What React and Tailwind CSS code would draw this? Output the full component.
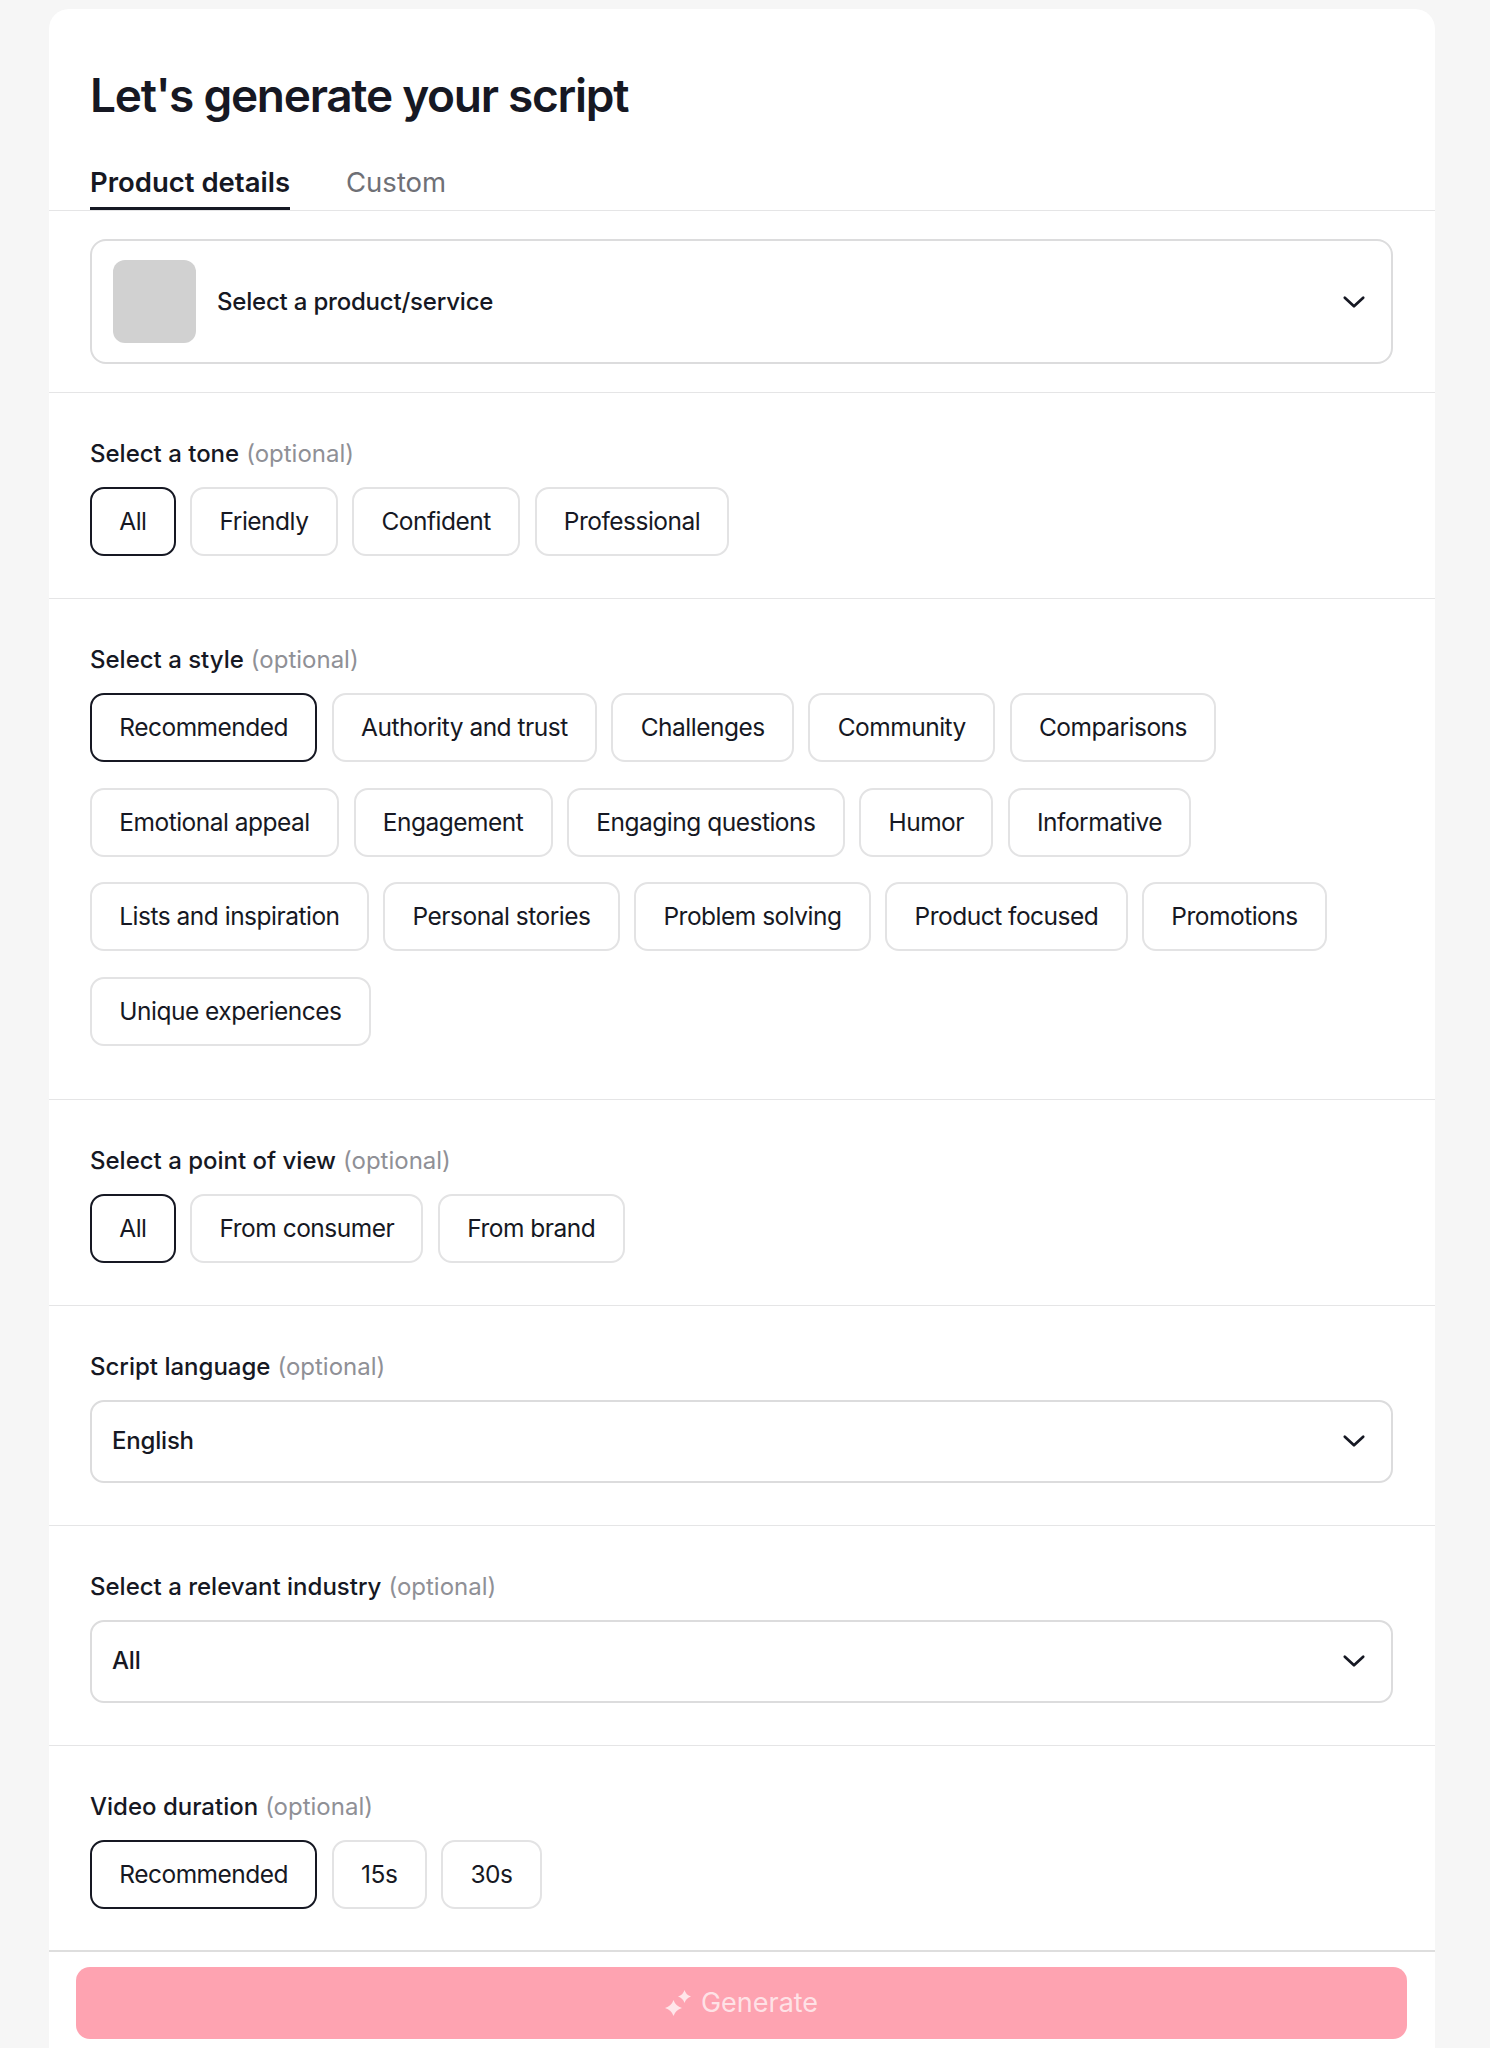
const FONT = "font-['Inter','Noto_Sans',sans-serif]";

function Chevron() {
  return (
    <svg viewBox="0 0 24 24" className="h-[26px] w-[26px] shrink-0" fill="none" stroke="#161823" strokeWidth="2.5" strokeLinecap="round" strokeLinejoin="round">
      <path d="M3.5 8 12 16 20.5 8" />
    </svg>
  );
}

function Sparkle() {
  return (
    <svg viewBox="0 0 26 26" className="h-[26px] w-[26px] shrink-0" fill="currentColor">
      <path d="M8.5 10Q10.500 16 17 18 10.500 20 8.500 26 6.500 20 0 18 6.500 16 8.500 10Z" />
      <path d="M19.500 0Q21 5 26 6.500 21 8 19.500 13 18 8 13 6.500 18 5 19.500 0Z" />
    </svg>
  );
}

function Label({ title }) {
  return (
    <div className="mb-[16px] flex h-[34px] items-center gap-[7px] text-[24px] leading-[34px]">
      <span className="font-medium text-[#161823]">{title}</span>
      <span className="text-[#8f9096]">(optional)</span>
    </div>
  );
}

function Chips({ items, selected }) {
  return (
    <div className="flex flex-wrap gap-x-[14.5px] gap-y-[25.5px]">
      {items.map((item) => (
        <div
          key={item}
          className={`flex h-[69px] items-center rounded-[14px] border-2 px-[27.25px] text-[24.5px] tracking-[-0.5px] text-[#161823] ${item === selected ? "border-[#161823]" : "border-[#e3e3e4]"}`}
        >
          {item}
        </div>
      ))}
    </div>
  );
}

function SelectBox({ value }) {
  return (
    <div className="flex h-[83px] items-center justify-between rounded-[14px] border-2 border-[#dcdcdd] pl-[20px] pr-[24px]">
      <span className="text-[24px] font-medium tracking-[-0.2px] text-[#161823]">{value}</span>
      <Chevron />
    </div>
  );
}

function Section({ children }) {
  return <section className="border-b border-[#e5e5e6] pl-[41px] pr-[42px] pt-[44px] pb-[42px]">{children}</section>;
}

export default function App() {
  return (
    <div className={`h-[2048px] overflow-hidden bg-[#f6f6f6] pt-[9px] pl-[49px] pr-[55px] ${FONT}`}>
      <div className="h-full rounded-t-[20px] bg-white">
        <div className="h-[202px] border-b border-[#e5e5e6]">
          <h1 className="px-[41px] pt-[52px] text-[46px] leading-[68px] font-semibold tracking-[-1.27px] text-[#161823]">Let's generate your script</h1>
          <div className="mt-[33.5px] flex gap-[56px] px-[41px]">
            <div className="h-[47.5px] border-b-[3px] border-[#161823] text-[27.5px] leading-[38px] font-semibold text-[#161823]">Product details</div>
            <div className="text-[27.5px] leading-[38px] text-[#6f7076]">Custom</div>
          </div>
        </div>

        <section className="border-b border-[#e5e5e6] pl-[41px] pr-[42px] pt-[28px] pb-[28px]">
          <div className="flex h-[125px] items-center justify-between rounded-[16px] border-2 border-[#dcdcdd] pl-[21px] pr-[24px]">
            <div className="flex items-center gap-[21px]">
              <div className="h-[83px] w-[83px] rounded-[12px] bg-[#d1d1d1]" />
              <span className="text-[24px] font-medium tracking-[-0.2px] text-[#161823]">Select a product/service</span>
            </div>
            <Chevron />
          </div>
        </section>

        <Section>
          <Label title="Select a tone" />
          <Chips items={["All", "Friendly", "Confident", "Professional"]} selected="All" />
        </Section>

        <section className="border-b border-[#e5e5e6] pl-[41px] pr-[42px] pt-[44px] pb-[53px]">
          <Label title="Select a style" />
          <Chips
            items={[
              "Recommended", "Authority and trust", "Challenges", "Community", "Comparisons",
              "Emotional appeal", "Engagement", "Engaging questions", "Humor", "Informative",
              "Lists and inspiration", "Personal stories", "Problem solving", "Product focused", "Promotions",
              "Unique experiences",
            ]}
            selected="Recommended"
          />
        </section>

        <Section>
          <Label title="Select a point of view" />
          <Chips items={["All", "From consumer", "From brand"]} selected="All" />
        </Section>

        <Section>
          <Label title="Script language" />
          <SelectBox value="English" />
        </Section>

        <Section>
          <Label title="Select a relevant industry" />
          <SelectBox value="All" />
        </Section>

        <section className="border-b-2 border-[#dedede] pl-[41px] pr-[42px] pt-[44px] pb-[41px]">
          <Label title="Video duration" />
          <Chips items={["Recommended", "15s", "30s"]} selected="Recommended" />
        </section>

        <div className="pl-[27px] pr-[28px] pt-[15px]">
          <div className="flex h-[72px] items-center justify-center gap-[10px] rounded-[14px] bg-[#fea3b1] text-[27px] text-white/70">
            <span className="text-[#ffe6ea]"><Sparkle /></span>
            <span className="pt-[2px]">Generate</span>
          </div>
        </div>
      </div>
    </div>
  );
}
